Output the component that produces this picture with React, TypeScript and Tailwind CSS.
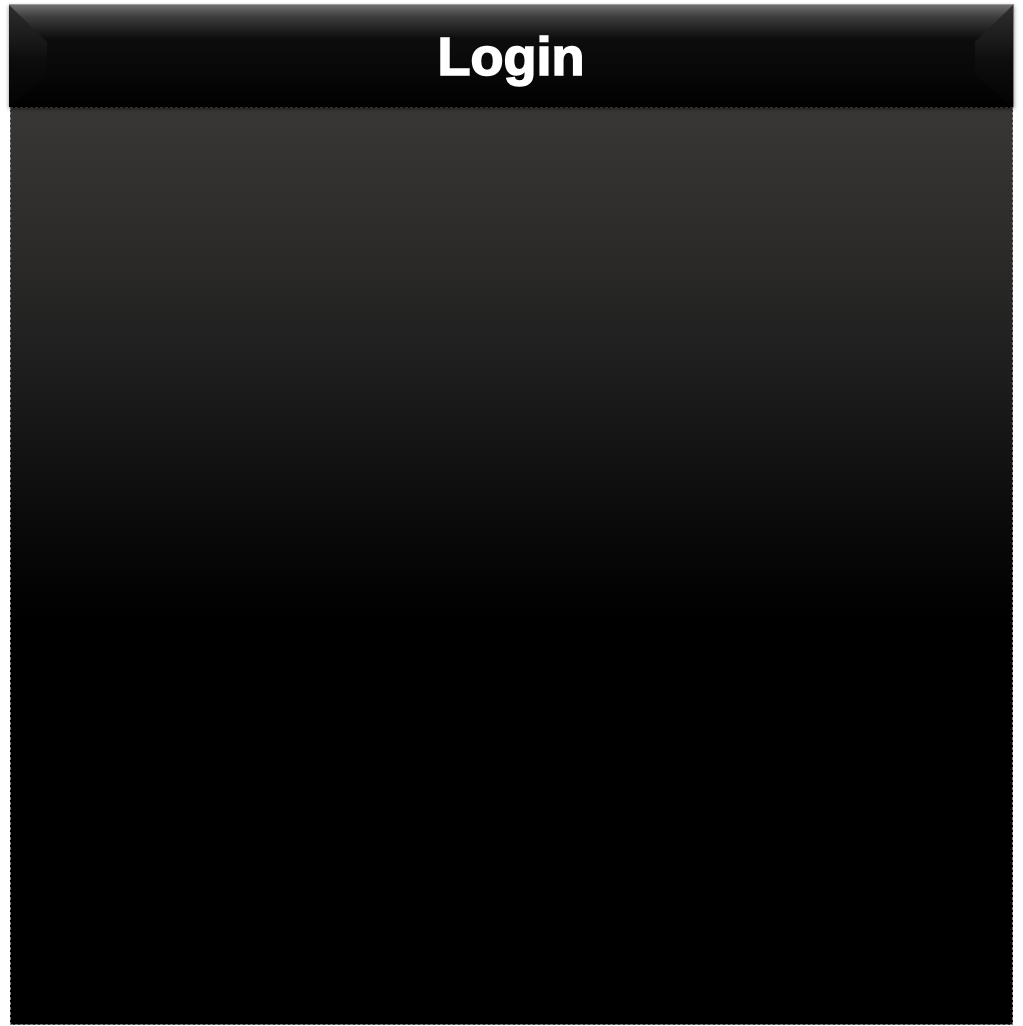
import React from 'react';

const Header = ({ title }: { title: string }) => (
  <div className="relative h-[103px] border-t border-[#9c9c9c] border-r border-r-[#7a7a7a] bg-[linear-gradient(to_bottom,#6e6e6e_0%,#3c3c3c_12%,#0d0d0d_33%,#070707_70%,#000_100%)] shadow-[0_2px_4px_rgba(0,0,0,0.45)]">
    {/* side bevels */}
    <div className="absolute left-0 top-0 h-full w-[38px] bg-[linear-gradient(to_bottom,#2e2e2e,#0c0c0c_55%,#030303)] [clip-path:polygon(0_0,100%_36%,100%_68%,0_100%)]" />
    <div className="absolute right-0 top-0 h-full w-[38px] bg-[linear-gradient(to_bottom,#303030,#0d0d0d_55%,#030303)] [clip-path:polygon(0_36%,100%_0,100%_100%,0_68%)]" />
    <div className="relative flex h-full items-center justify-center">
      <h1 className="font-['Liberation_Sans',Arial,sans-serif] text-[54px] font-bold leading-none text-white [-webkit-text-stroke:1.6px_white]">
        {title}
      </h1>
    </div>
  </div>
);

export default function App() {
  return (
    <div className="min-h-[1026px] bg-white px-[9px] pt-[4px]">
      <Header title="Login" />
      {/* Login panel */}
      <div className="mx-[1px] h-[918px] border border-dashed border-[#7c7c7c] border-t-[#4a4a4a] bg-[linear-gradient(to_bottom,#393735_0%,#2c2b2a_15%,#1c1c1c_30%,#0a0a0a_45%,#000_56%,#000_100%)]" />
    </div>
  );
}
